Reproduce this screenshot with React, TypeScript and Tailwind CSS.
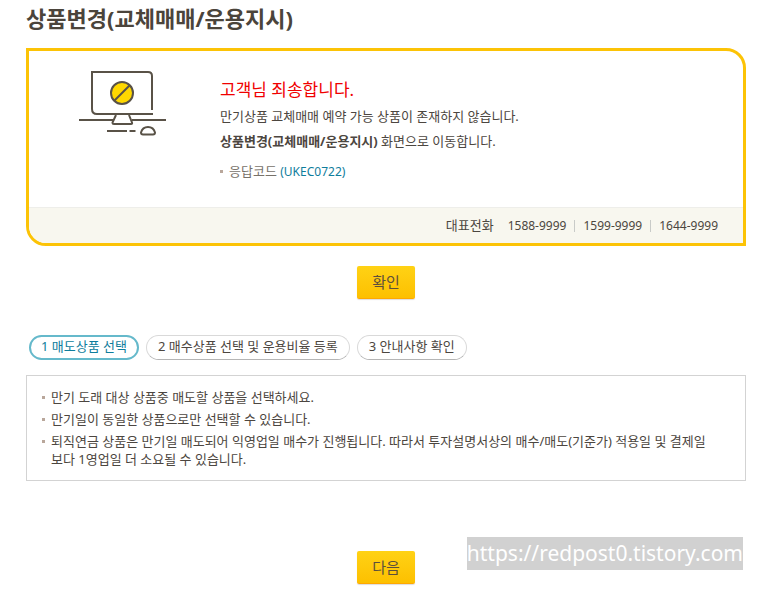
const PHONES = ["1588-9999", "1599-9999", "1644-9999"];

const STEPS = ["1 매도상품 선택", "2 매수상품 선택 및 운용비율 등록", "3 안내사항 확인"];

const NOTES = [
  "만기 도래 대상 상품중 매도할 상품을 선택하세요.",
  "만기일이 동일한 상품으로만 선택할 수 있습니다.",
  "퇴직연금 상품은 만기일 매도되어 익영업일 매수가 진행됩니다. 따라서 투자설명서상의 매수/매도(기준가) 적용일 및 결제일보다 1영업일 더 소요될 수 있습니다.",
];

function BlockedComputer() {
  return (
    <svg width="88" height="66" viewBox="0 0 88 66" fill="none" stroke="#595247" strokeWidth="2" aria-hidden="true">
      <path d="M12 1H69Q73 1 73 5V39" />
      <path d="M13 0V38Q13 43 18 43H74" />
      <path d="M0 49H34M53 49H87" />
      <path d="M37 44L33.500 51.500Q33.500 53 35 53H52Q53.500 53 53 51.500L50 44" />
      <path d="M28 60H48M50.500 60H56.500" />
      <path d="M62 61.500Q63.500 56 69 56Q74.500 56 76 61.500Q76 63.500 74 63.500H64Q62 63.500 62 61.500Z" />
      <circle cx="43" cy="22" r="11" fill="#ffd800" />
      <path d="M35.500 29.500L50.500 14.500" />
    </svg>
  );
}

function YellowButton({ children }: { children: string }) {
  return (
    <button
      type="button"
      className="h-[33px] rounded-xs border-b border-[#ffa800] bg-linear-to-b from-[#ffd214] to-[#fdc000] px-[15px] text-[15px] leading-8 text-[#5c4f3d] shadow-[0_1px_1px_#dddddd]"
    >
      {children}
    </button>
  );
}

function Notes() {
  return (
    <ul className="mt-[15px] space-y-1 border border-[#d3d3d3] py-3 pr-[30px] pl-[15px] leading-[18px]">
      {NOTES.map((note) => (
        <li key={note} className="flex gap-[6px]">
          <span className="mt-2 size-[3px] shrink-0 bg-[#b9a79b]" />
          <span>{note}</span>
        </li>
      ))}
    </ul>
  );
}

export default function App() {
  return (
    <main className="relative bg-white pt-[2px] pr-[37px] pb-6 pl-[26px] font-['Noto_Sans','Noto_Sans_CJK_KR',sans-serif] text-[13px] text-[#4c4640]">
      <h1 className="text-[22px] leading-8 font-bold text-[#4b443b]">상품변경(교체매매/운용지시)</h1>

      <section className="mt-[14px] overflow-hidden rounded-tr-[20px] rounded-bl-[20px] border-3 border-[#fcc306]">
        <div className="flex h-[156px] pl-[50px]">
          <div className="w-[141px] shrink-0 pt-5">
            <BlockedComputer />
          </div>
          <div className="pt-[27px]">
            <h2 className="text-[17px] leading-6 text-[#f00000]">고객님 죄송합니다.</h2>
            <p className="mt-px leading-[26px]">만기상품 교체매매 예약 가능 상품이 존재하지 않습니다.</p>
            <p className="leading-6">
              <strong className="font-bold">상품변경(교체매매/운용지시)</strong> 화면으로 이동합니다.
            </p>
            <p className="mt-[5px] flex items-center gap-[6px] leading-[26px] text-[#777169]">
              <span className="size-[3px] bg-[#b9a79b]" />
              <span>
                응답코드 <span className="text-xs text-[#0f7d9c]">(UKEC0722)</span>
              </span>
            </p>
          </div>
        </div>
        <div className="flex h-9 items-center justify-end border-t border-[#eeeeea] bg-[#f8f7ef] pr-[25px]">
          <span className="mr-[14px]">대표전화</span>
          <ul className="flex items-center text-xs">
            {PHONES.map((phone, i) => (
              <li key={phone} className="flex items-center">
                {i > 0 && <span className="mx-2 h-3 w-px bg-[#c9cbc8]" />}
                {phone}
              </li>
            ))}
          </ul>
        </div>
      </section>

      <div className="mt-5 flex justify-center">
        <YellowButton>확인</YellowButton>
      </div>

      <ol className="mt-9 flex gap-[7px] pl-[3px]">
        {STEPS.map((step, i) => (
          <li
            key={step}
            aria-current={i === 0 ? "step" : undefined}
            className={
              i === 0
                ? "h-[25px] rounded-full border-2 border-[#65b9cb] px-[10px] leading-[18px] text-[#0f7d9c]"
                : "h-[25px] rounded-full border border-[#d9d9d9] border-b-[#b5b5b5] px-[11px] leading-5"
            }
          >
            {step}
          </li>
        ))}
      </ol>

      <Notes />

      <div className="mt-[70px] flex justify-center">
        <YellowButton>다음</YellowButton>
      </div>

      <p className="absolute right-10 bottom-[38px] bg-[#d1d1d1] text-[21px] leading-[33px] text-white">
        https://redpost0.tistory.com
      </p>
    </main>
  );
}
